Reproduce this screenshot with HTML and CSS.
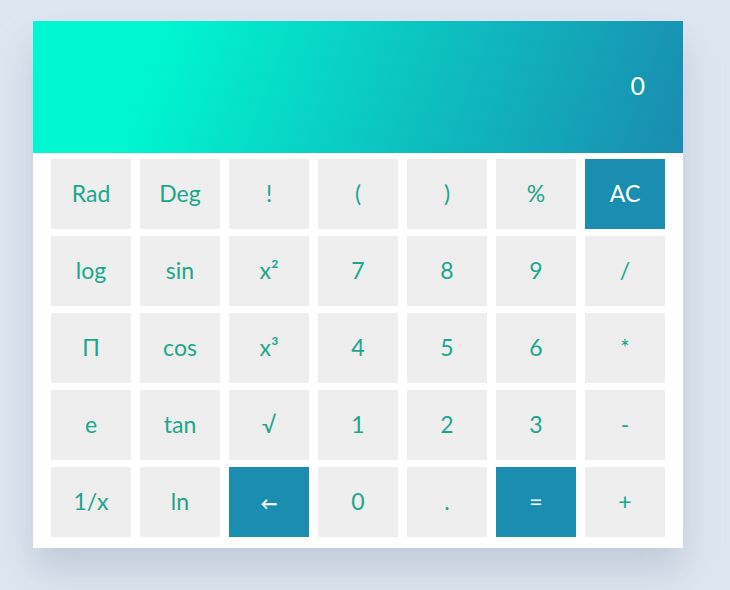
FILE: index.html
```html
<!DOCTYPE html>
<html>
<head>
<meta charset="utf-8">
<link rel="stylesheet" href="styles.css">
</head>
<body>
<div class="calc">
  <div class="display"><span class="value">0</span></div>
  <div class="keys">
    <button class="key">Rad</button>
    <button class="key">Deg</button>
    <button class="key">!</button>
    <button class="key">(</button>
    <button class="key">)</button>
    <button class="key">%</button>
    <button class="key dark">AC</button>

    <button class="key">log</button>
    <button class="key">sin</button>
    <button class="key">x²</button>
    <button class="key">7</button>
    <button class="key">8</button>
    <button class="key">9</button>
    <button class="key">/</button>

    <button class="key">Π</button>
    <button class="key">cos</button>
    <button class="key">x³</button>
    <button class="key">4</button>
    <button class="key">5</button>
    <button class="key">6</button>
    <button class="key">*</button>

    <button class="key">e</button>
    <button class="key">tan</button>
    <button class="key">√</button>
    <button class="key">1</button>
    <button class="key">2</button>
    <button class="key">3</button>
    <button class="key">-</button>

    <button class="key">1/x</button>
    <button class="key">ln</button>
    <button class="key dark"><span class="arrow">←</span></button>
    <button class="key">0</button>
    <button class="key">.</button>
    <button class="key dark">=</button>
    <button class="key">+</button>
  </div>
</div>
</body>
</html>
```
FILE: styles.css
```css
html, body {
  margin: 0;
  padding: 0;
}
body {
  background: #dee6f1;
  width: 730px;
  height: 590px;
  overflow: hidden;
  font-family: Lato, "Open Sans", sans-serif;
}
.calc {
  margin: 21px 0 0 33px;
  width: 650px;
  background: #ffffff;
  box-shadow: 0 22px 36px rgba(150, 160, 180, 0.4);
}
.display {
  height: 132px;
  background: linear-gradient(110deg, #00f7d0 18%, #1a8bb0 100%);
  display: flex;
  align-items: center;
  justify-content: flex-end;
  padding-right: 38px;
  box-sizing: border-box;
}
.value {
  color: #ffffff;
  font-size: 25px;
  margin-top: -4px;
}
.keys {
  display: grid;
  grid-template-columns: repeat(7, 80px);
  grid-auto-rows: 70px;
  column-gap: 9px;
  row-gap: 7px;
  padding: 6px 18px 11px 18px;
}
.key {
  border: none;
  margin: 0;
  padding: 0 0 2px 0;
  background: #eeeeee;
  color: #1ba78b;
  font-family: Lato, "Open Sans", sans-serif;
  font-size: 23px;
  font-weight: 400;
  cursor: pointer;
}
.key.dark {
  background: #1a8db1;
  color: #ffffff;
}
.arrow {
  font-size: 17px;
  font-weight: 700;
}
```
